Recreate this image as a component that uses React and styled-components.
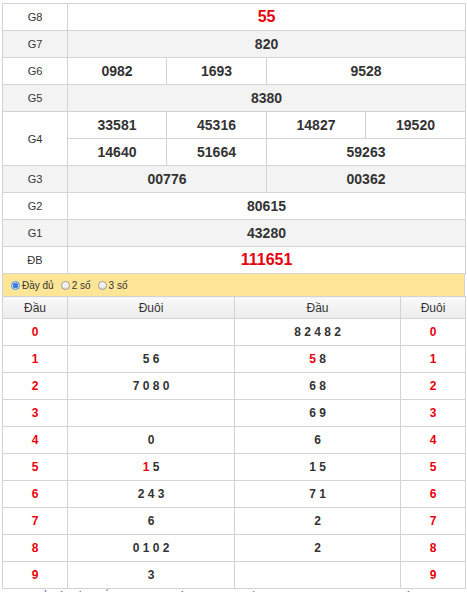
import React from "react";
import styled, { createGlobalStyle } from "styled-components";

const Global = createGlobalStyle`
  html, body { margin: 0; padding: 0; background: #fff; }
  body { font-family: "Liberation Sans", Arial, sans-serif; color: #333; }
`;

const Page = styled.div`
  padding: 3px 2px 0 2px;
  width: 463px;
  height: 592px;
  overflow: hidden;
`;

const Table = styled.table`
  width: 463px;
  border-collapse: collapse;
  table-layout: fixed;
`;

const Row = styled.tr`
  background: ${(p) => (p.$alt ? "#f3f3f3" : "#fff")};
`;

const Label = styled.td`
  border: 1px solid #d3d3d3;
  height: 26px;
  padding: 0;
  text-align: center;
  font-size: 11px;
  color: #333;
`;

const Num = styled.td`
  border: 1px solid #d3d3d3;
  height: 26px;
  padding: 0;
  text-align: center;
  font-weight: bold;
  font-size: ${(p) => (p.$special ? "16px" : "14px")};
  color: ${(p) => (p.$special ? "#e8000b" : "#333")};
`;

const OptionBar = styled.div`
  display: flex;
  align-items: center;
  height: 22px;
  background: #ffe596;
  border-left: 1px solid #d3d3d3;
  border-right: 1px solid #d3d3d3;
  padding-left: 8px;
  gap: 7px;
  font-size: 10px;
  color: #333;
`;

const Option = styled.label`
  display: flex;
  align-items: center;
  gap: 2px;
`;

const Dot = styled.span`
  width: 7px;
  height: 7px;
  border-radius: 50%;
  border: 1px solid ${(p) => (p.$on ? "#4a89d8" : "#9a9a9a")};
  background: ${(p) =>
    p.$on
      ? "radial-gradient(circle, #3a7fe0 0 2.6px, #cfe2fb 3px)"
      : "linear-gradient(#ffffff, #e2e2e2)"};
`;

const Loto = styled.table`
  width: 463px;
  border-collapse: collapse;
  table-layout: fixed;
`;

const Head = styled.th`
  border: 1px solid #d3d3d3;
  height: 21px;
  padding: 0;
  font-weight: normal;
  font-size: 12px;
  color: #333;
  background: linear-gradient(#f9f9f9, #ececec);
`;

const Cell = styled.td`
  border: 1px solid #d3d3d3;
  height: 26px;
  padding: 0;
  text-align: center;
  font-size: 12px;
  font-weight: bold;
  color: ${(p) => (p.$red ? "#e8000b" : "#333")};
`;

const Red = styled.span`
  color: #e8000b;
`;

const Footer = styled.p`
  margin: 0;
  font-size: 12px;
  line-height: 16px;
  color: #1f4e99;
  white-space: nowrap;
  padding-left: 30px;
`;

const prizes = [
  { label: "G8", cells: [{ v: "55", span: 4, special: true }] },
  { label: "G7", cells: [{ v: "820", span: 4 }], alt: true },
  { label: "G6", cells: [{ v: "0982", span: 1 }, { v: "1693", span: 1 }, { v: "9528", span: 2 }] },
  { label: "G5", cells: [{ v: "8380", span: 4 }], alt: true },
];

const heads = [
  ["", "8 2 4 8 2"],
  ["5 6", [["5", true], [" 8", false]]],
  ["7 0 8 0", "6 8"],
  ["", "6 9"],
  ["0", "6"],
  [[["1", true], [" 5", false]], "1 5"],
  ["2 4 3", "7 1"],
  ["6", "2"],
  ["0 1 0 2", "2"],
  ["3", ""],
];

const renderVal = (v) =>
  Array.isArray(v)
    ? v.map(([t, r], i) => (r ? <Red key={i}>{t}</Red> : <span key={i}>{t}</span>))
    : v;

export default function App() {
  return (
    <Page>
      <Global />
      <Table>
        <colgroup>
          <col style={{ width: 65 }} />
          <col style={{ width: 99 }} />
          <col style={{ width: 100 }} />
          <col style={{ width: 99 }} />
          <col style={{ width: 100 }} />
        </colgroup>
        <tbody>
          {prizes.map((p) => (
            <Row key={p.label} $alt={p.alt}>
              <Label>{p.label}</Label>
              {p.cells.map((c, i) => (
                <Num key={i} colSpan={c.span} $special={c.special}>
                  {c.v}
                </Num>
              ))}
            </Row>
          ))}
          <Row>
            <Label rowSpan={2}>G4</Label>
            <Num>33581</Num>
            <Num>45316</Num>
            <Num>14827</Num>
            <Num>19520</Num>
          </Row>
          <Row>
            <Num>14640</Num>
            <Num>51664</Num>
            <Num colSpan={2}>59263</Num>
          </Row>
          <Row $alt>
            <Label>G3</Label>
            <Num colSpan={2}>00776</Num>
            <Num colSpan={2}>00362</Num>
          </Row>
          <Row>
            <Label>G2</Label>
            <Num colSpan={4}>80615</Num>
          </Row>
          <Row $alt>
            <Label>G1</Label>
            <Num colSpan={4}>43280</Num>
          </Row>
          <Row>
            <Label>ĐB</Label>
            <Num colSpan={4} $special>
              111651
            </Num>
          </Row>
        </tbody>
      </Table>
      <OptionBar>
        <Option>
          <Dot $on />
          Đầy đủ
        </Option>
        <Option>
          <Dot />2 số
        </Option>
        <Option>
          <Dot />3 số
        </Option>
      </OptionBar>
      <Loto>
        <colgroup>
          <col style={{ width: 65 }} />
          <col style={{ width: 167 }} />
          <col style={{ width: 166 }} />
          <col style={{ width: 65 }} />
        </colgroup>
        <thead>
          <tr>
            <Head>Đầu</Head>
            <Head>Đuôi</Head>
            <Head>Đầu</Head>
            <Head>Đuôi</Head>
          </tr>
        </thead>
        <tbody>
          {heads.map(([tail, head], i) => (
            <tr key={i}>
              <Cell $red>{i}</Cell>
              <Cell>{renderVal(tail)}</Cell>
              <Cell>{renderVal(head)}</Cell>
              <Cell $red>{i}</Cell>
            </tr>
          ))}
        </tbody>
      </Loto>
      <Footer>Xổ số Miền Bắc thứ sáu: thống kê lô tô, đầu đuôi, giải đặc biệt mới nhất hôm nay</Footer>
    </Page>
  );
}
